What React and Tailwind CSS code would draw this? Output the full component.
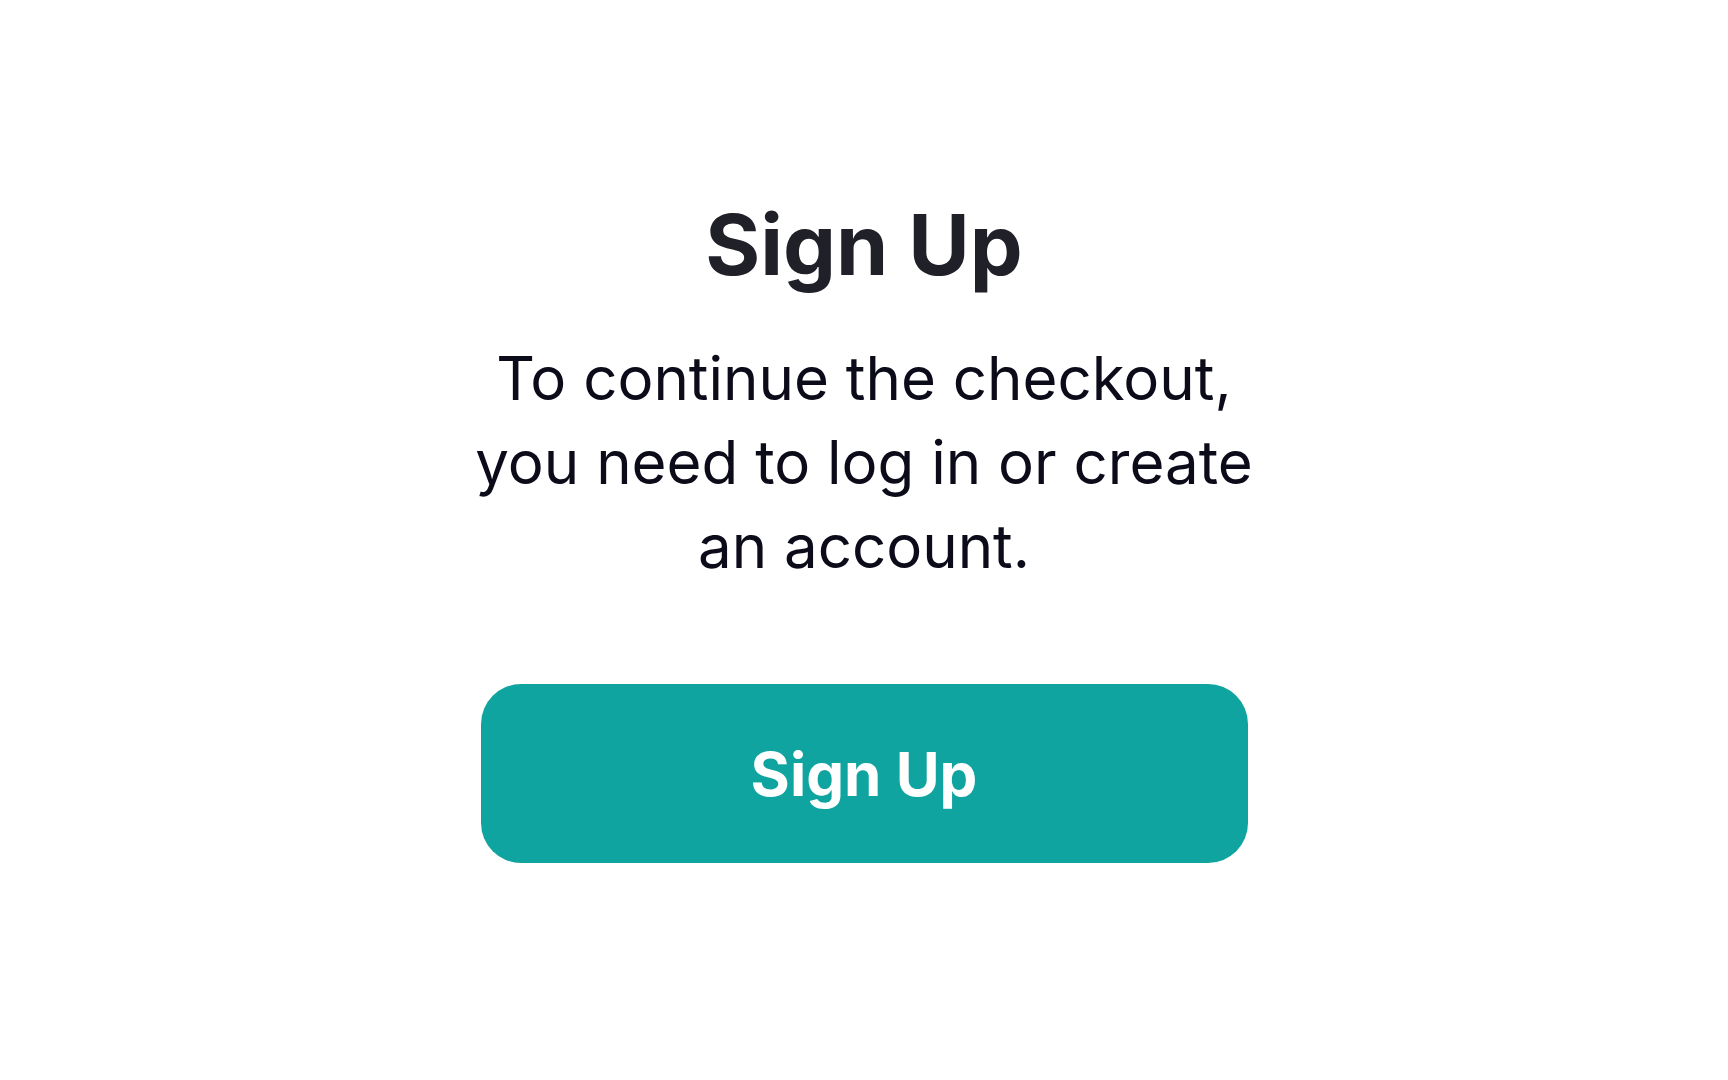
export default function App() {
  return (
    <div className="min-h-screen bg-white flex justify-center font-['Inter',sans-serif]">
      <div className="w-[767px] pt-[194px] flex flex-col items-center text-center">
        <h1 className="text-[84px] font-bold leading-[102px] text-[#202029]">Sign Up</h1>
        <p className="mt-[40px] w-[800px] text-[60px] leading-[84px] text-[#0b0b19]">
          To continue the checkout, you need to log in or create an account.
        </p>
        <button
          type="button"
          className="mt-[96px] w-full h-[179px] rounded-[40px] bg-[#0fa4a0] text-white text-[60px] font-bold"
        >
          Sign Up
        </button>
      </div>
    </div>
  )
}
